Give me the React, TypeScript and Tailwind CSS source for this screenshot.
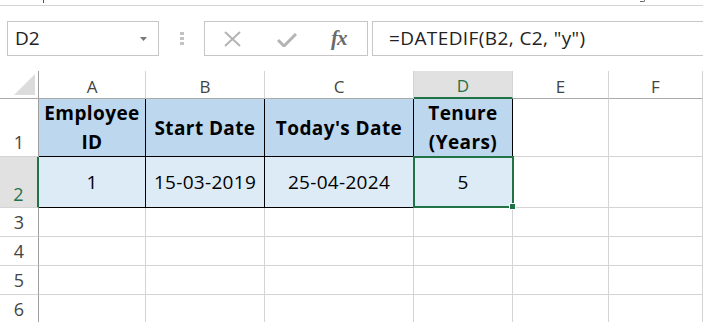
import React from "react";

const cols = ["A", "B", "C", "D", "E", "F"];

const ColHead = ({ label, active }: { label: string; active?: boolean }) => (
  <div
    className={
      active
        ? "flex items-center justify-center pt-[4px] bg-[#e1e1e1] border-r border-r-[#d4d4d4] border-b-2 border-b-[#217346] text-[#217346] text-[17px]"
        : "flex items-center justify-center pt-[4px] border-r border-r-[#d4d4d4] border-b border-b-[#ababab] text-[#444] text-[17px]"
    }
  >
    {label}
  </div>
);

const RowHead = ({ n, active }: { n: number; active?: boolean }) => (
  <div
    className={
      active
        ? "flex items-end justify-center pb-[4px] bg-[#e1e1e1] border-r-2 border-r-[#217346] border-b border-b-[#d4d4d4] text-[#217346] text-[18px] leading-none"
        : "flex items-end justify-center pb-[5px] border-r border-r-[#9e9e9e] border-b border-b-[#d4d4d4] text-[#444] text-[18px] leading-none"
    }
  >
    {n}
  </div>
);

const Empty = () => <div className="border-r border-b border-[#d4d4d4]" />;

const HeadCell = ({ children }: { children: React.ReactNode }) => (
  <div className="flex items-center justify-center text-center bg-[#bdd7ee] border-r border-b border-black font-bold text-[19px] leading-[29px] tracking-[0.4px] text-black pt-[1px]">
    {children}
  </div>
);

const DataCell = ({ children, selected }: { children: React.ReactNode; selected?: boolean }) => (
  <div className="relative flex items-center justify-center bg-[#ddebf7] border-r border-b border-black text-[19px] tracking-[0.3px] text-black">
    {children}
    {selected && (
      <div className="absolute -left-[1px] -top-[1px] -right-[2px] -bottom-[1px] border-2 border-[#217346]">
        <div className="absolute -right-[4px] -bottom-[4px] w-[7px] h-[7px] bg-[#217346] border border-white" />
      </div>
    )}
  </div>
);

export default function App() {
  return (
    <div className="w-[703px] h-[322px] overflow-hidden bg-white font-['Open_Sans',sans-serif] text-black">
      {/* clipped strip of the ribbon above */}
      <div className="h-[6px] border-b border-[#d5d5d5] flex items-start">
        <div className="ml-[43px] w-[1px] h-[3px] bg-[#555]" />
        <div className="ml-[596px] w-[5px] h-[2px] border-b border-r border-[#666] rounded-br-[3px]" />
      </div>

      {/* formula bar */}
      <div className="h-[65px] flex items-start pt-[15px]">
        <div className="ml-[7px] w-[152px] h-[35px] border border-[#c6c6c6] flex items-center justify-between pl-[7px] pr-[11px]">
          <span className="text-[19px] text-[#222]">D2</span>
          <svg width="7" height="4" viewBox="0 0 7 4">
            <path d="M0 0 H7 L3.5 4 Z" fill="#777" />
          </svg>
        </div>
        <div className="w-[45px] h-[35px] flex flex-col items-center justify-center gap-[2px]">
          <div className="w-[4px] h-[3px] bg-[#c3c3c3]" />
          <div className="w-[4px] h-[3px] bg-[#c3c3c3]" />
          <div className="w-[4px] h-[3px] bg-[#c3c3c3]" />
        </div>
        <div className="w-[164px] h-[35px] border border-[#c6c6c6] flex items-center">
          <svg className="ml-[19px]" width="17" height="16" viewBox="0 0 17 16">
            <path d="M1 1 L16 15 M16 1 L1 15" stroke="#b4b4b4" strokeWidth="2" />
          </svg>
          <svg className="ml-[36px] mt-[2px]" width="20" height="14" viewBox="0 0 20 14">
            <path d="M1 7 L7 13 L19 1" stroke="#b4b4b4" strokeWidth="3" fill="none" />
          </svg>
          <span className="ml-[34px] font-['Liberation_Serif',serif] italic font-bold text-[21px] text-[#6a6a6a] leading-none tracking-[-1px]">
            fx
          </span>
        </div>
        <div className="ml-[4px] flex-1 -mr-[2px] h-[35px] border border-[#c6c6c6] flex items-center pl-[16px]">
          <span className="text-[19px] tracking-[0.4px] text-[#222]">=DATEDIF(B2, C2, "y")</span>
        </div>
      </div>

      {/* grid */}
      <div className="grid grid-cols-[39px_107px_119px_149px_99px_96px_94px] grid-rows-[28px_58px_51px_29px_29px_29px_29px]">
        <div className="flex items-end justify-end pr-[3px] pb-[3px] border-r border-r-[#9e9e9e] border-b border-b-[#ababab]">
          <svg width="21" height="21" viewBox="0 0 21 21">
            <path d="M21 0 V21 H0 Z" fill="#dcdcdc" />
          </svg>
        </div>
        {cols.map((c) => (
          <ColHead key={c} label={c} active={c === "D"} />
        ))}

        <RowHead n={1} />
        <HeadCell>
          Employee
          <br />
          ID
        </HeadCell>
        <HeadCell>Start Date</HeadCell>
        <HeadCell>Today's Date</HeadCell>
        <HeadCell>
          Tenure
          <br />
          (Years)
        </HeadCell>
        <Empty />
        <Empty />

        <RowHead n={2} active />
        <DataCell>1</DataCell>
        <DataCell>15-03-2019</DataCell>
        <DataCell>25-04-2024</DataCell>
        <DataCell selected>5</DataCell>
        <Empty />
        <Empty />

        {[3, 4, 5, 6].map((n) => (
          <React.Fragment key={n}>
            <RowHead n={n} />
            <Empty />
            <Empty />
            <Empty />
            <Empty />
            <Empty />
            <Empty />
          </React.Fragment>
        ))}
      </div>
    </div>
  );
}
